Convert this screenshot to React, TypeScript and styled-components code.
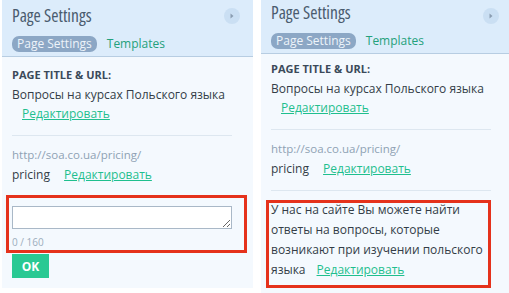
import React from 'react'
import styled, { createGlobalStyle } from 'styled-components'

const GlobalStyle = createGlobalStyle`
  html, body {
    margin: 0;
    padding: 0;
    background: #ffffff;
  }
  body {
    font-family: 'Open Sans', 'Noto Sans', sans-serif;
    color: #333d47;
    overflow: hidden;
  }
`

interface ShiftProps {
  $shift?: number
}

const Page = styled.div`
  display: flex;
  align-items: flex-start;
  gap: 8px;
  padding-left: 2px;
  width: 520px;
`

const Panel = styled.div`
  width: 251px;
  flex-shrink: 0;
  background: #f4f9fe;
`

const Header = styled.div<ShiftProps>`
  position: relative;
  background: #dcecfb;
  border-bottom: 1px solid #b7cde2;
  padding: ${({ $shift }) => 4 - ($shift || 0)}px 10px 4px;
`

const Title = styled.div`
  font-size: 17.5px;
  font-stretch: 75%;
  line-height: 22px;
  color: #4a5b6e;
`

const Toggle = styled.div`
  position: absolute;
  top: 8px;
  right: 13px;
  width: 16px;
  height: 16px;
  border-radius: 50%;
  background: #cadff3;
  display: flex;
  align-items: center;
  justify-content: center;
`

const Tabs = styled.div`
  display: flex;
  align-items: center;
  gap: 10px;
  margin-top: 10px;
`

const Tab = styled.span<{ $active?: boolean }>`
  font-size: 12px;
  line-height: 16px;
  padding: 0 5px;
  border-radius: 7px;
  background: ${({ $active }) => ($active ? '#8ca7c5' : 'transparent')};
  color: ${({ $active }) => ($active ? '#eef4fa' : '#24a17c')};
  margin-left: ${({ $active }) => ($active ? '0' : '-5px')};
`

const Body = styled.div<ShiftProps>`
  padding: ${({ $shift }) => 8 - ($shift || 0)}px 21px 10px 10px;
`

const Label = styled.div`
  font-size: 11px;
  font-weight: 700;
  line-height: 20px;
  color: #3b4a5a;
`

const Text = styled.div`
  font-size: 12px;
  line-height: 19px;
  color: #333d47;
`

const Link = styled.a<{ $indent?: boolean }>`
  color: #1fbf8e;
  text-decoration: underline;
  cursor: pointer;
  margin-left: ${({ $indent }) => ($indent ? '10px' : '11px')};
`

const Divider = styled.hr`
  border: 0;
  border-top: 1px solid #dde7f0;
  margin: 12px 0 0;
`

const Url = styled.div`
  font-size: 11.5px;
  line-height: 16px;
  color: #8fa2b4;
  margin-top: 11px;
`

const SlugRow = styled(Text)`
  margin-top: 2px;
`

interface HighlightProps {
  $left: number
  $right: number
}

const Highlight = styled.div<HighlightProps>`
  border: 3px solid #e5321c;
  margin-left: -${({ $left }) => $left}px;
  margin-right: -${({ $right }) => $right}px;
  padding-left: ${({ $left }) => $left - 3}px;
  padding-right: ${({ $right }) => Math.max($right - 3, 0)}px;
`

const EditorBox = styled(Highlight)`
  margin-top: 11px;
  padding-top: 8px;
`

const TextArea = styled.textarea`
  display: block;
  box-sizing: border-box;
  width: 100%;
  height: 23px;
  border: 1px solid #a9b8c7;
  background: #ffffff;
  resize: vertical;
  margin: 0;
  padding: 2px 4px;
  font-family: inherit;
  font-size: 12px;
`

const Counter = styled.div`
  font-size: 10px;
  line-height: 16px;
  color: #9cadbd;
  margin-top: 5px;
`

const OkButton = styled.button`
  display: block;
  margin-top: 1px;
  width: 37px;
  height: 24px;
  border: 0;
  padding: 0;
  background: #29c993;
  color: #ffffff;
  font-family: inherit;
  font-weight: 700;
  font-size: 12px;
`

const DescriptionBox = styled(Highlight)`
  margin-top: 9px;
  padding-bottom: 5px;
`

const Description = styled.div`
  font-size: 12px;
  line-height: 20px;
  color: #333d47;
  margin-top: -3px;
`

const ChevronIcon = () => (
  <svg width="6" height="8" viewBox="0 0 6 8">
    <path d="M1.5 1.5 L4.5 4 L1.5 6.5 Z" fill="#8a9db1" />
  </svg>
)

const PanelHead: React.FC<{ shift?: number }> = ({ shift }) => (
  <Header $shift={shift}>
    <Title>Page Settings</Title>
    <Toggle>
      <ChevronIcon />
    </Toggle>
    <Tabs>
      <Tab $active>Page Settings</Tab>
      <Tab>Templates</Tab>
    </Tabs>
  </Header>
)

const TitleSection = () => (
  <>
    <Label>PAGE TITLE &amp; URL:</Label>
    <Text>Вопросы на курсах Польского языка</Text>
    <Text>
      <Link $indent>Редактировать</Link>
    </Text>
    <Divider />
    <Url>http://soa.co.ua/pricing/</Url>
    <SlugRow>
      pricing <Link>Редактировать</Link>
    </SlugRow>
  </>
)

const App: React.FC = () => {
  return (
    <>
      <GlobalStyle />
      <Page>
        <Panel>
          <PanelHead />
          <Body>
            <TitleSection />
            <EditorBox $left={6} $right={15}>
              <TextArea />
              <Counter>0 / 160</Counter>
            </EditorBox>
            <OkButton>OK</OkButton>
          </Body>
        </Panel>
        <Panel>
          <PanelHead shift={3} />
          <Body $shift={3}>
            <TitleSection />
            <Divider />
            <DescriptionBox $left={5} $right={0}>
              <Description>
                У нас на сайте Вы можете найти ответы на вопросы, которые
                возникают при изучении польского языка
                <Link>Редактировать</Link>
              </Description>
            </DescriptionBox>
          </Body>
        </Panel>
      </Page>
    </>
  )
}

export default App
